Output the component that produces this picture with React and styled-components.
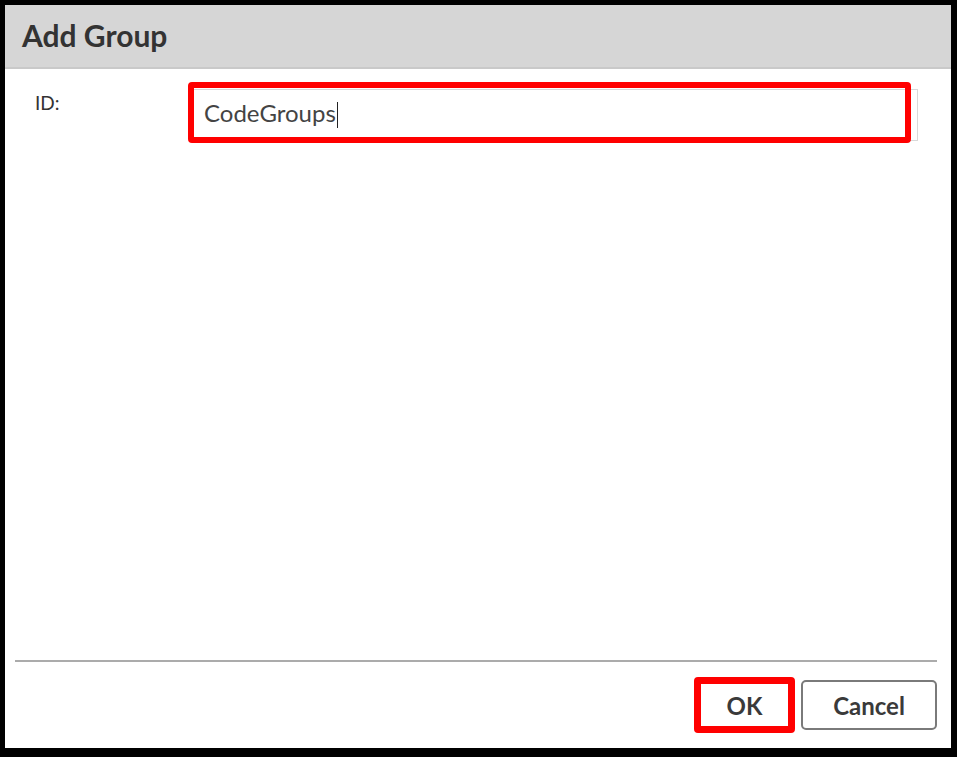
import React from 'react'
import styled, { createGlobalStyle } from 'styled-components'

const GlobalStyle = createGlobalStyle`
  html, body {
    margin: 0;
    padding: 0;
    background: #000;
  }
  body {
    font-family: Lato, 'Open Sans', sans-serif;
  }
`

const Dialog = styled.div`
  margin: 5px 6px 0 5px;
  height: 743px;
  background: #fff;
  display: flex;
  flex-direction: column;
`

const Header = styled.div`
  height: 62px;
  background: #d6d6d6;
  border-bottom: 2px solid #c9c9c9;
  display: flex;
  align-items: center;
  padding-left: 17px;
  padding-bottom: 3px;
  box-sizing: border-box;
  height: 64px;
`

const Title = styled.h1`
  margin: 0;
  font-size: 30px;
  font-weight: 700;
  color: #333;
`

const Body = styled.div`
  flex: 1;
  padding: 20px 33px 0 30px;
`

const FieldRow = styled.div`
  display: flex;
  align-items: flex-start;
`

const Label = styled.label`
  width: 155px;
  flex-shrink: 0;
  font-size: 19px;
  color: #333;
  padding-top: 2px;
`

const InputWrap = styled.div`
  position: relative;
  flex: 1;
`

const Input = styled.div`
  height: 50px;
  border: 1px solid #d9d9d9;
  display: flex;
  align-items: center;
  padding: 0 0 5px 13px;
  box-sizing: border-box;
  height: 52px;
  font-size: 24px;
  color: #444;
`

const Caret = styled.span`
  display: inline-block;
  width: 1px;
  height: 26px;
  background: #222;
  margin: 4px 0 0 1px;
`

const Highlight = styled.div`
  position: absolute;
  left: -2px;
  top: -7px;
  width: 723px;
  height: 61px;
  box-sizing: border-box;
  border: 6px solid #ff0000;
  border-radius: 4px;
  pointer-events: none;
`

const Footer = styled.div`
  margin: 0 14px 0 10px;
  border-top: 2px solid #ababab;
  padding: 15px 0 15px;
  display: flex;
  justify-content: flex-end;
  align-items: center;
  gap: 6px;
`

const Button = styled.button`
  box-sizing: border-box;
  width: ${(p) => p.$width}px;
  height: ${(p) => (p.$marked ? 56 : 50)}px;
  background: #fff;
  border: ${(p) => (p.$marked ? '7px solid #ff0000' : '2px solid #7a7a7a')};
  border-radius: ${(p) => (p.$marked ? 4 : 5)}px;
  font-family: Lato, 'Open Sans', sans-serif;
  font-size: 24px;
  font-weight: 700;
  color: #3a3a3a;
  padding: 0;
  cursor: pointer;
`

export default function App() {
  return (
    <>
      <GlobalStyle />
      <Dialog>
        <Header>
          <Title>Add Group</Title>
        </Header>
        <Body>
          <FieldRow>
            <Label>ID:</Label>
            <InputWrap>
              <Input>
                CodeGroups
                <Caret />
              </Input>
              <Highlight />
            </InputWrap>
          </FieldRow>
        </Body>
        <Footer>
          <Button $width={101} $marked>
            OK
          </Button>
          <Button $width={136}>Cancel</Button>
        </Footer>
      </Dialog>
    </>
  )
}
